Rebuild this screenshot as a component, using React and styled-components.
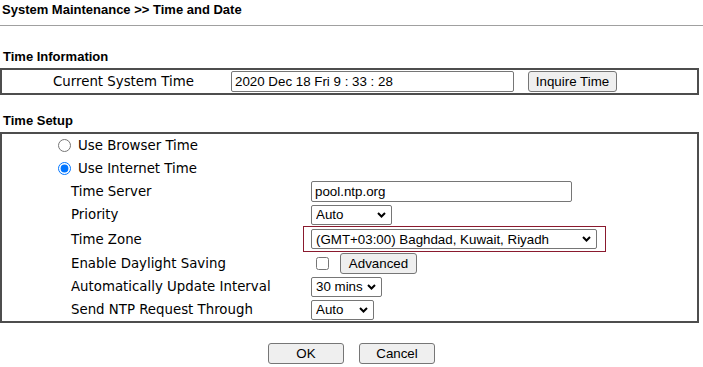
import styled, { createGlobalStyle } from "styled-components";

const GlobalStyle = createGlobalStyle`
  body {
    margin: 0;
    background: #fff;
    color: #000;
    font-family: "Liberation Sans", Arial, sans-serif;
  }
`;

const Page = styled.div`
  width: 703px;
  height: 367px;
  overflow: hidden;
`;

const Title = styled.h1`
  margin: 0;
  padding: 3px 0 0 2px;
  font-size: 13px;
  line-height: 14px;
  font-weight: bold;
`;

const Rule = styled.hr`
  margin: 8px 0 0;
  height: 0;
  border: 0;
  border-top: 1px solid #a0a0a0;
`;

const SectionTitle = styled.h2`
  margin: ${(p) => p.$top}px 0 4px;
  padding-left: 3px;
  font-size: 13px;
  line-height: 14px;
  font-weight: bold;
`;

const Panel = styled.div`
  box-sizing: border-box;
  width: 699px;
  border: 2px solid #4d4d4d;
`;

const InfoRow = styled.div`
  display: flex;
  align-items: center;
  height: 23px;
`;

const Label = styled.span`
  box-sizing: border-box;
  width: ${(p) => p.$width || "auto"};
  padding-left: ${(p) => p.$indent}px;
  font-family: "DejaVu Sans", Verdana, sans-serif;
  font-size: 13.33px;
  white-space: nowrap;
`;

const SetupGrid = styled.div`
  display: grid;
  grid-template-columns: 309px 1fr;
  grid-template-rows: repeat(4, 23px) 26px repeat(3, 23px);
  align-items: center;
`;

const RadioRow = styled.label`
  grid-column: 1 / -1;
  display: flex;
  align-items: center;
  gap: 7px;
  padding-left: 56px;
  font-family: "DejaVu Sans", Verdana, sans-serif;
  font-size: 13.33px;
`;

const Radio = styled.input.attrs({ type: "radio", name: "mode" })`
  width: 13px;
  height: 13px;
  margin: 0;
`;

const Cell = styled.div`
  display: flex;
  align-items: center;
  gap: ${(p) => p.$gap || 0}px;
`;

const TextInput = styled.input.attrs({ type: "text" })`
  box-sizing: border-box;
  width: ${(p) => p.$width}px;
  height: 21px;
  margin: 0;
  padding: 1px 3px;
  border: 1px solid #767676;
  border-radius: 2px;
  font-family: "Liberation Sans", Arial, sans-serif;
  font-size: 13.33px;
  color: #000;
`;

const Button = styled.button`
  box-sizing: border-box;
  width: ${(p) => p.$width}px;
  height: 21px;
  margin: 0 0 0 ${(p) => p.$offset || 0}px;
  padding: 0;
  border: 1px solid #767676;
  border-radius: 3px;
  background: #efefef;
  font-family: "Liberation Sans", Arial, sans-serif;
  font-size: 13.33px;
  color: #000;
`;

const SelectWrap = styled.span`
  position: relative;
  display: inline-flex;
`;

const Select = styled.select`
  box-sizing: border-box;
  width: ${(p) => p.$width}px;
  height: 20px;
  margin: 0;
  padding: 0 0 0 4px;
  border: 1px solid #767676;
  border-radius: 2px;
  background: #fff;
  appearance: none;
  font-family: "Liberation Sans", Arial, sans-serif;
  font-size: 13.33px;
  color: #000;
`;

const Chevron = styled.svg`
  position: absolute;
  right: 6px;
  top: 7px;
  pointer-events: none;
`;

const Highlight = styled.div`
  display: flex;
  align-items: center;
  margin-left: -8px;
  padding: 2px 8px 2px 7px;
  border: 1px solid #8a1a2e;
  width: fit-content;
`;

const Checkbox = styled.input.attrs({ type: "checkbox" })`
  width: 13px;
  height: 13px;
  margin: 0 0 0 5px;
`;

const Actions = styled.div`
  display: flex;
  justify-content: center;
  gap: 15px;
  margin-top: 20px;
  padding-left: 0;
`;

function Dropdown({ width, value, options }) {
  return (
    <SelectWrap>
      <Select $width={width} defaultValue={value}>
        {options.map((o) => (
          <option key={o}>{o}</option>
        ))}
      </Select>
      <Chevron width="9" height="6" viewBox="0 0 9 6">
        <path d="M1 1 L4.5 4.5 L8 1" fill="none" stroke="#000" strokeWidth="2" />
      </Chevron>
    </SelectWrap>
  );
}

export default function App() {
  return (
    <Page>
      <GlobalStyle />
      <Title>System Maintenance &gt;&gt; Time and Date</Title>
      <Rule />

      <SectionTitle $top={24}>Time Information</SectionTitle>
      <Panel>
        <InfoRow>
          <Label $indent={51} $width="229px">Current System Time</Label>
          <TextInput $width={283} defaultValue="2020 Dec 18 Fri 9 : 33 : 28" />
          <Button $width={89} $offset={14}>Inquire Time</Button>
        </InfoRow>
      </Panel>

      <SectionTitle $top={19}>Time Setup</SectionTitle>
      <Panel>
        <SetupGrid>
          <RadioRow>
            <Radio />
            Use Browser Time
          </RadioRow>
          <RadioRow>
            <Radio defaultChecked />
            Use Internet Time
          </RadioRow>

          <Label $indent={69}>Time Server</Label>
          <Cell>
            <TextInput $width={261} defaultValue="pool.ntp.org" />
          </Cell>

          <Label $indent={69}>Priority</Label>
          <Cell>
            <Dropdown width={81} value="Auto" options={["Auto", "1", "2"]} />
          </Cell>

          <Label $indent={69}>Time Zone</Label>
          <Cell>
            <Highlight>
              <Dropdown
                width={286}
                value="(GMT+03:00) Baghdad, Kuwait, Riyadh"
                options={["(GMT+03:00) Baghdad, Kuwait, Riyadh"]}
              />
            </Highlight>
          </Cell>

          <Label $indent={69}>Enable Daylight Saving</Label>
          <Cell $gap={11}>
            <Checkbox />
            <Button $width={77}>Advanced</Button>
          </Cell>

          <Label $indent={69}>Automatically Update Interval</Label>
          <Cell>
            <Dropdown width={71} value="30 mins" options={["30 mins", "1 hour"]} />
          </Cell>

          <Label $indent={69}>Send NTP Request Through</Label>
          <Cell>
            <Dropdown width={63} value="Auto" options={["Auto", "WAN1"]} />
          </Cell>
        </SetupGrid>
      </Panel>

      <Actions>
        <Button $width={76}>OK</Button>
        <Button $width={76}>Cancel</Button>
      </Actions>
    </Page>
  );
}
